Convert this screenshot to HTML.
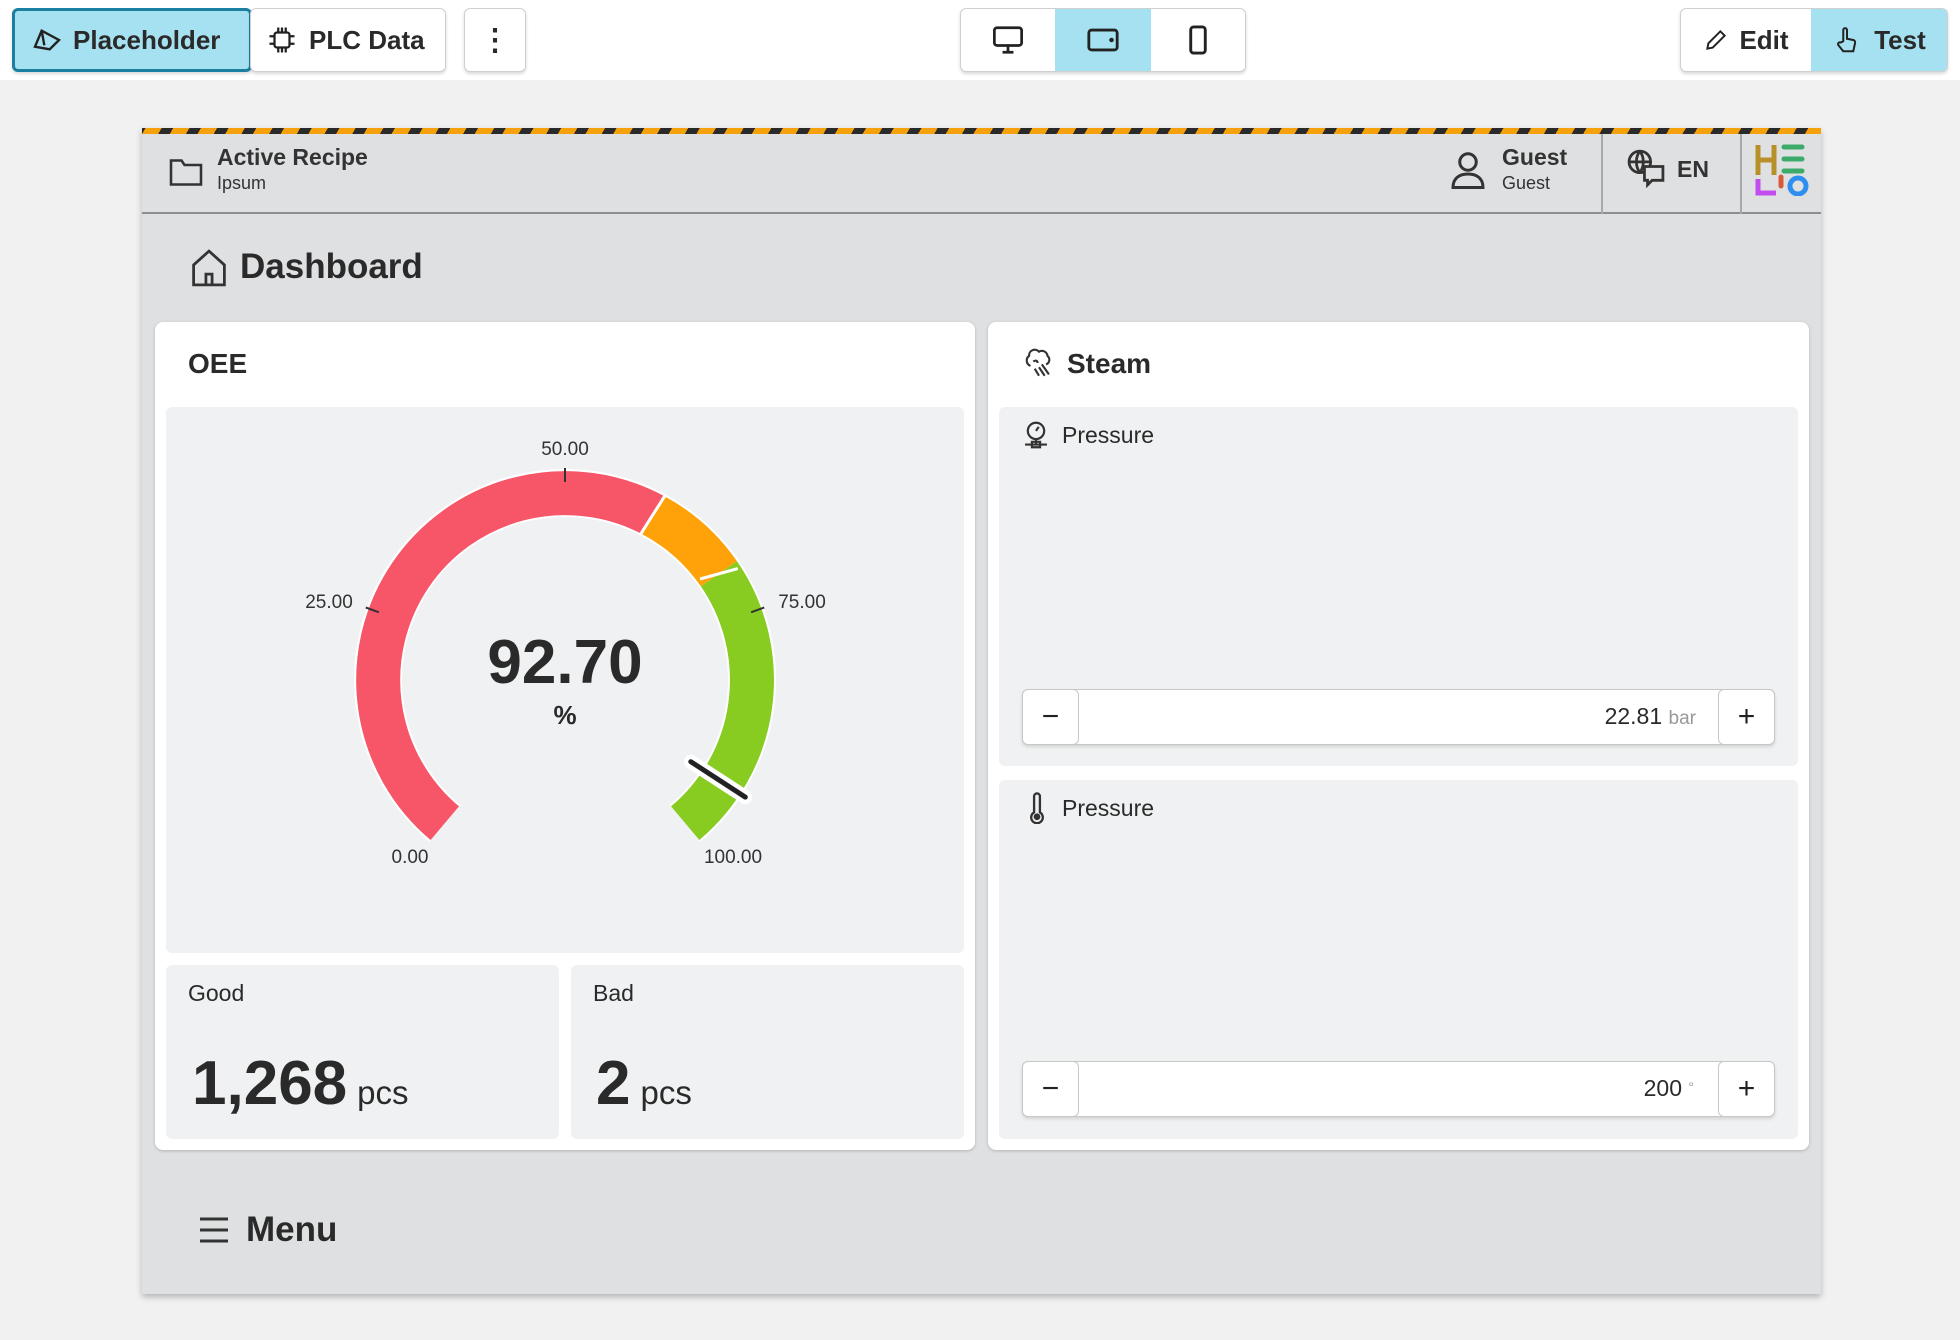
<!DOCTYPE html>
<html><head><meta charset="utf-8"><style>
*{box-sizing:border-box;margin:0;padding:0}
body{width:1960px;height:1340px;position:relative;overflow:hidden;background:#f1f1f1;font-family:"Liberation Sans",sans-serif;color:#2a2a2a}
.a{position:absolute}
.top{left:0;top:0;width:1960px;height:80px;background:#fff}
.btn{position:absolute;top:8px;height:64px;background:#fff;border:1px solid #cfcfcf;border-radius:6px;box-shadow:0 2px 3px rgba(0,0,0,.15);display:flex;align-items:center;font-size:26px;font-weight:bold;color:#2a2a2a}
.cy{background:#a6e1f1}
.frame{left:142px;top:128px;width:1679px;height:1166px;background:#dfe0e2;box-shadow:0 3px 6px rgba(0,0,0,.25)}
.stripe{left:0;top:0;width:100%;height:6px;background:repeating-linear-gradient(-60deg,#f5a10c 0 14px,#2a2a2a 14px 24px)}
.card{background:#fff;border-radius:8px;box-shadow:0 1px 3px rgba(0,0,0,.2)}
.pan{background:#f0f1f2;border-radius:6px}
.step{height:56px;background:#fff;border:1px solid #c8c8c8;border-radius:6px;box-shadow:0 2px 3px rgba(0,0,0,.12)}
.sb{position:absolute;top:-1px;width:57px;height:56px;background:#fff;border:1px solid #c8c8c8;border-radius:6px;font-size:30px;display:flex;align-items:center;justify-content:center;color:#222}
</style></head><body>
<div class="a top"></div>
<div class="btn cy" style="left:12px;width:240px;border:3px solid #1c7fa0;padding-left:16px">
<svg width="32" height="32" viewBox="0 0 24 24" fill="none" stroke="#222" stroke-width="1.8"><path d="M3 17 L8 5 L21 12 L14 19 Z M8 5 L10 16"/></svg><span style="margin-left:10px">Placeholder</span></div>
<div class="btn" style="left:250px;width:196px;padding-left:16px">
<svg width="30" height="30" viewBox="0 0 24 24" fill="none" stroke="#222" stroke-width="1.8"><rect x="6" y="6" width="12" height="12" rx="2"/><path d="M9 2v4M12 2v4M15 2v4M9 18v4M12 18v4M15 18v4M2 9h4M2 15h4M18 9h4M18 15h4"/></svg><span style="margin-left:12px">PLC Data</span></div>
<div class="btn" style="left:464px;width:62px;justify-content:center;font-size:30px">⋮</div>
<div class="btn" style="left:960px;width:286px;overflow:hidden">
<div style="width:95px;height:100%;display:flex;align-items:center;justify-content:center"><svg width="34" height="30" viewBox="0 0 24 22" fill="none" stroke="#222" stroke-width="2"><rect x="2" y="2" width="20" height="13" rx="2"/><path d="M12 15v4M8 20h8"/></svg></div>
<div class="cy" style="width:96px;height:100%;display:flex;align-items:center;justify-content:center"><svg width="34" height="26" viewBox="0 0 24 18" fill="none" stroke="#222" stroke-width="2"><rect x="2" y="2" width="20" height="14" rx="2"/><circle cx="18" cy="9" r=".6" fill="#222"/></svg></div>
<div style="width:95px;height:100%;display:flex;align-items:center;justify-content:center"><svg width="22" height="32" viewBox="0 0 14 22" fill="none" stroke="#222" stroke-width="2"><rect x="2" y="2" width="10" height="18" rx="2"/></svg></div></div>
<div class="btn" style="left:1680px;width:268px;overflow:hidden">
<div style="width:131px;height:100%;display:flex;align-items:center;justify-content:center"><svg width="26" height="26" viewBox="0 0 24 24" fill="none" stroke="#222" stroke-width="1.8"><path d="M4 20l1-5L16 4l4 4L9 19z"/></svg><span style="margin-left:10px">Edit</span></div>
<div class="cy" style="width:137px;height:100%;display:flex;align-items:center;justify-content:center"><svg width="30" height="30" viewBox="0 0 24 24" fill="none" stroke="#222" stroke-width="1.6"><path d="M9 13V4a1.5 1.5 0 013 0v7l5 1a2 2 0 011.5 2.3L17 21H9l-4-5a1.5 1.5 0 012-2z"/></svg><span style="margin-left:12px">Test</span></div></div>

<div class="a frame">
<div class="a stripe"></div>
<div class="a" style="left:0;top:6px;width:100%;height:80px;border-bottom:2px solid #8e8e8e"></div>
<svg class="a" style="left:26px;top:26px" width="36" height="34" viewBox="0 0 24 22" fill="none" stroke="#333" stroke-width="1.7"><path d="M2 4h7l2 3h11v13H2z"/></svg>
<div class="a" style="left:75px;top:16px;font-size:23px;font-weight:bold;color:#333">Active Recipe</div>
<div class="a" style="left:75px;top:45px;font-size:18px;color:#333">Ipsum</div>
<svg class="a" style="left:1308px;top:22px" width="36" height="42" viewBox="0 0 24 28" fill="none" stroke="#333" stroke-width="2"><circle cx="12" cy="8" r="5.5"/><path d="M2 25c0-6 4-9 10-9s10 3 10 9z"/></svg>
<div class="a" style="left:1360px;top:16px;font-size:23px;font-weight:bold;color:#333">Guest</div>
<div class="a" style="left:1360px;top:45px;font-size:18px;color:#333">Guest</div>
<div class="a" style="left:1459px;top:6px;width:2px;height:80px;background:#a8a8a8"></div>
<div class="a" style="left:1598px;top:6px;width:2px;height:80px;background:#a8a8a8"></div>
<svg class="a" style="left:1484px;top:20px" width="40" height="40" viewBox="0 0 26 26" fill="none" stroke="#333" stroke-width="1.8"><circle cx="9" cy="9" r="7"/><path d="M2 9h14M9 2c-3 4-3 10 0 14M9 2c3 4 3 10 0 14"/><path d="M12 12h12v9h-7l-3 3v-3h-2z" fill="#dfe0e2"/></svg>
<div class="a" style="left:1535px;top:28px;font-size:23px;font-weight:bold;color:#333">EN</div>
<svg class="a" style="left:1612px;top:14px" width="56" height="54" viewBox="0 0 56 54"><path d="M4 3v30M20 3v30M4 18h16" stroke="#b8902a" stroke-width="5"/><path d="M30 5h18M30 17h18M30 29h18" stroke="#3cab6a" stroke-width="5" stroke-linecap="round"/><path d="M4 37v14h18" stroke="#c34ef0" stroke-width="5" fill="none"/><path d="M27 35v9" stroke="#d85a3a" stroke-width="5" stroke-linecap="round"/><circle cx="44" cy="44" r="8" stroke="#2e8ff0" stroke-width="5" fill="none"/></svg>

<svg class="a" style="left:48px;top:120px" width="38" height="40" viewBox="0 0 24 26" fill="none" stroke="#333" stroke-width="1.8"><path d="M2 11L12 2l10 9v13H2zM10 24v-7h4v7"/></svg>
<div class="a" style="left:98px;top:119px;font-size:35px;font-weight:bold;color:#2a2a2a">Dashboard</div>

<div class="a card" style="left:13px;top:194px;width:820px;height:828px"></div>
<div class="a" style="left:46px;top:220px;font-size:28px;font-weight:bold">OEE</div>
<div class="a pan" style="left:24px;top:279px;width:798px;height:546px"></div>
<svg class="a" style="left:0;top:0" width="1000" height="1000"><g transform="translate(-142,-128)">
<path d="M444.8 823.2 A187 187 0 1 1 685.2 823.2" stroke="#fff" stroke-width="48" fill="none"/>
<path d="M444.8 823.2 A187 187 0 0 1 652.8 514.9" stroke="#f75568" stroke-width="44" fill="none"/>
<path d="M652.8 514.9 A187 187 0 0 1 718.9 573.8" stroke="#ffa20a" stroke-width="44" fill="none"/>
<path d="M718.9 573.8 A187 187 0 0 1 685.2 823.2" stroke="#88cc22" stroke-width="44" fill="none"/>
<path d="M640.5 534.3L665.1 495.5M700 579L737.8 568.6" stroke="#fff" stroke-width="3"/>
<path d="M378.9 612.3L365.8 607.5M565 482V468M751.1 612.3L764.2 607.5" stroke="#333" stroke-width="2"/>
<path d="M690.8 761.7L745.3 797.1" stroke="#fff" stroke-width="14" stroke-linecap="round"/>
<path d="M690.8 761.7L745.3 797.1" stroke="#222" stroke-width="5" stroke-linecap="round"/>
<g font-family="Liberation Sans,sans-serif" font-size="19" fill="#333" text-anchor="middle">
<text x="565" y="455">50.00</text><text x="329" y="608">25.00</text><text x="802" y="608">75.00</text><text x="410" y="863">0.00</text><text x="733" y="863">100.00</text></g>
<text x="565" y="683" font-family="Liberation Sans,sans-serif" font-size="62" font-weight="bold" fill="#2a2a2a" text-anchor="middle">92.70</text>
<text x="565" y="724" font-family="Liberation Sans,sans-serif" font-size="26" font-weight="bold" fill="#2a2a2a" text-anchor="middle">%</text>
</g></svg>
<div class="a pan" style="left:24px;top:837px;width:393px;height:174px"></div>
<div class="a pan" style="left:429px;top:837px;width:393px;height:174px"></div>
<div class="a" style="left:46px;top:852px;font-size:23px">Good</div>
<div class="a" style="left:451px;top:852px;font-size:23px">Bad</div>
<div class="a" style="left:50px;top:920px;font-size:62px;font-weight:bold">1,268<span style="font-size:33px;font-weight:normal;margin-left:10px">pcs</span></div>
<div class="a" style="left:454px;top:920px;font-size:62px;font-weight:bold">2<span style="font-size:33px;font-weight:normal;margin-left:10px">pcs</span></div>

<div class="a card" style="left:846px;top:194px;width:821px;height:828px"></div>
<svg class="a" style="left:880px;top:218px" width="34" height="34" viewBox="0 0 24 24" fill="none" stroke="#333" stroke-width="1.5"><path d="M6 14a4 4 0 01-1-7 4 4 0 017-3 4 4 0 016 3 3.5 3.5 0 01-1 6M8 11c1-1 3-1 3 1M14 13l5 7M12 15l4 6M9 16l3 5"/></svg>
<div class="a" style="left:925px;top:220px;font-size:28px;font-weight:bold">Steam</div>
<div class="a pan" style="left:857px;top:279px;width:799px;height:359px"></div>
<div class="a pan" style="left:857px;top:652px;width:799px;height:359px"></div>
<svg class="a" style="left:880px;top:292px" width="28" height="30" viewBox="0 0 20 22" fill="none" stroke="#333" stroke-width="1.6"><circle cx="10" cy="8" r="6"/><path d="M10 8l2-3M10 14v4M2 18h16M7 16h6v4H7z"/></svg>
<div class="a" style="left:920px;top:294px;font-size:23px">Pressure</div>
<svg class="a" style="left:884px;top:664px" width="22" height="32" viewBox="0 0 14 22" fill="none" stroke="#333" stroke-width="1.6"><path d="M5 14V3a2 2 0 014 0v11a4 4 0 11-4 0z"/><circle cx="7" cy="17" r="1.5" fill="#333"/></svg>
<div class="a" style="left:920px;top:667px;font-size:23px">Pressure</div>
<div class="a step" style="left:880px;top:561px;width:753px">
<div class="sb" style="left:-1px">−</div><div class="sb" style="right:-1px">+</div>
<div class="a" style="right:78px;top:13px;font-size:23px">22.81 <span style="color:#999;font-size:19px">bar</span></div></div>
<div class="a step" style="left:880px;top:933px;width:753px">
<div class="sb" style="left:-1px">−</div><div class="sb" style="right:-1px">+</div>
<div class="a" style="right:80px;top:13px;font-size:23px">200 <span style="color:#999;font-size:14px;vertical-align:4px">°</span></div></div>

<svg class="a" style="left:56px;top:1087px" width="32" height="30" viewBox="0 0 32 30" stroke="#333" stroke-width="3"><path d="M2 4h28M2 15h28M2 26h28"/></svg>
<div class="a" style="left:104px;top:1082px;font-size:35px;font-weight:bold">Menu</div>
</div>
</body></html>
